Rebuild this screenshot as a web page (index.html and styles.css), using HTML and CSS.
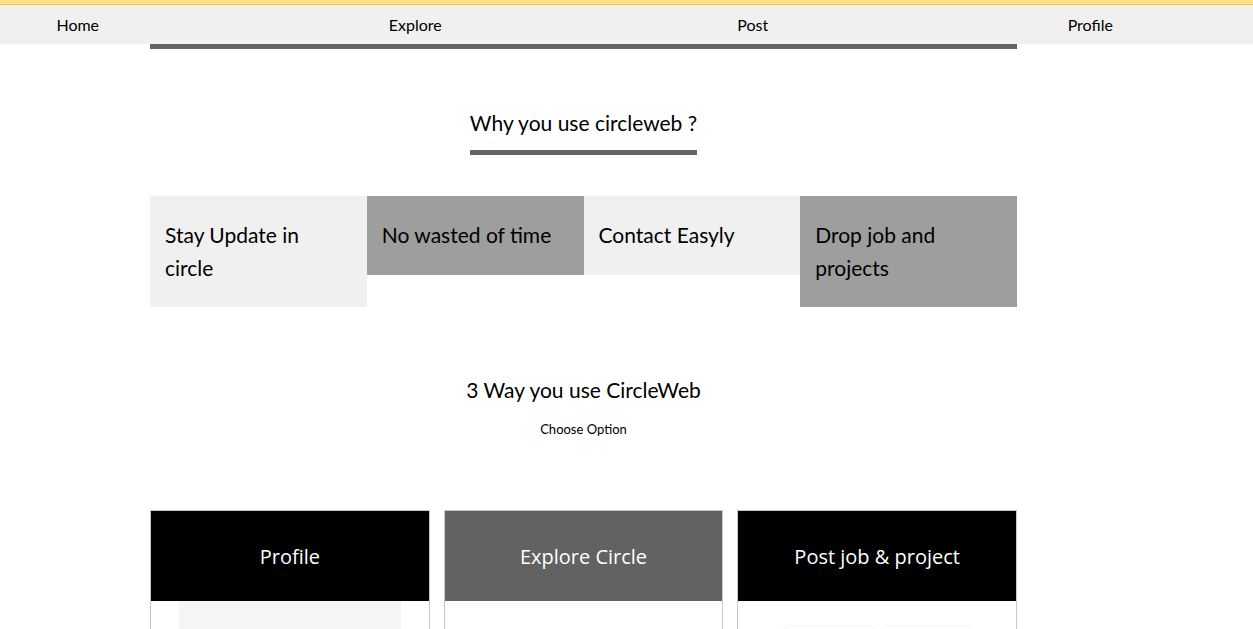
FILE: index.html
```html
<!DOCTYPE html>
<html>
<head>
<meta charset="utf-8">
<title>CircleWeb</title>
<link rel="stylesheet" href="styles.css">
</head>
<body>
<div class="topline"></div>
<nav class="nav">
  <ul class="nav-list">
    <li>Home</li>
    <li>Explore</li>
    <li>Post</li>
    <li>Profile</li>
  </ul>
</nav>
<main class="container">
  <div class="rule"></div>
  <section class="why">
    <h2 class="why-title">Why you use circleweb ?</h2>
  </section>
  <section class="reasons">
    <div class="reason light">Stay Update in circle</div>
    <div class="reason dark">No wasted of time</div>
    <div class="reason light">Contact Easyly</div>
    <div class="reason dark">Drop job and projects</div>
  </section>
  <section class="ways">
    <h2 class="ways-title">3 Way you use CircleWeb</h2>
    <p class="ways-sub">Choose Option</p>
  </section>
  <section class="cards">
    <div class="card">
      <div class="card-head black">Profile</div>
      <div class="card-body"><div class="profile-block"></div></div>
    </div>
    <div class="card">
      <div class="card-head grey">Explore Circle</div>
      <div class="card-body"></div>
    </div>
    <div class="card">
      <div class="card-head black">Post job &amp; project</div>
      <div class="card-body post-body">
        <div class="pill"></div>
        <div class="pill"></div>
      </div>
    </div>
  </section>
</main>
</body>
</html>
```

FILE: styles.css
```css
* { box-sizing: border-box; }
html, body { margin: 0; padding: 0; }
body {
  font-family: Lato, "Liberation Sans", sans-serif;
  color: #000;
  background: #fff;
  overflow: hidden;
  height: 629px;
}
.topline {
  height: 5px;
  background: #fde08a;
  border-bottom: 1px solid #f6c544;
}
.nav {
  background: #f0f0f0;
  height: 39px;
  overflow: hidden;
}
.nav-list {
  list-style: none;
  margin: 0 0 0 -91px;
  padding: 0;
  display: grid;
  grid-template-columns: repeat(4, 337.5px);
  font-size: 16px;
  line-height: 39px;
  text-align: center;
}
.container {
  width: 867px;
  margin-left: 150px;
}
.rule {
  height: 5px;
  background: #646464;
}
.why {
  text-align: center;
  padding-top: 59px;
}
.why-title {
  display: inline-block;
  margin: 0;
  font-size: 21px;
  font-weight: 400;
  line-height: 30px;
  padding-bottom: 12px;
  border-bottom: 5px solid #646464;
}
.reasons {
  display: flex;
  align-items: flex-start;
  margin-top: 41px;
}
.reason {
  flex: 1;
  font-size: 21px;
  line-height: 32.5px;
  padding: 23px 24px 23px 15px;
}
.reason.light { background: #f0f0f0; }
.reason.dark { background: #9e9e9e; }
.ways {
  text-align: center;
  margin-top: 68px;
}
.ways-title {
  margin: 0;
  font-size: 21px;
  font-weight: 400;
  line-height: 30px;
}
.ways-sub {
  margin: 15px 0 0;
  font-size: 13px;
  line-height: 18px;
}
.cards {
  display: flex;
  gap: 14px;
  margin-top: 72px;
}
.card {
  flex: 1;
  border: 1px solid #c8c8c8;
  height: 140px;
}
.card-head {
  height: 90px;
  display: flex;
  align-items: center;
  justify-content: center;
  color: #fff;
  font-family: "Open Sans", "Liberation Sans", sans-serif;
  font-size: 20px;
}
.card-head.black { background: #000; }
.card-head.grey { background: #626262; }
.card-body {
  height: 48px;
}
.profile-block {
  width: 222px;
  height: 48px;
  margin: 0 auto;
  background: #f5f5f7;
}
.post-body {
  display: flex;
  justify-content: center;
  gap: 5px;
  padding-top: 24px;
}
.pill {
  width: 92px;
  height: 24px;
  border: 1px solid #f7f7f7;
  border-radius: 6px;
  background: #fefefe;
}
```
